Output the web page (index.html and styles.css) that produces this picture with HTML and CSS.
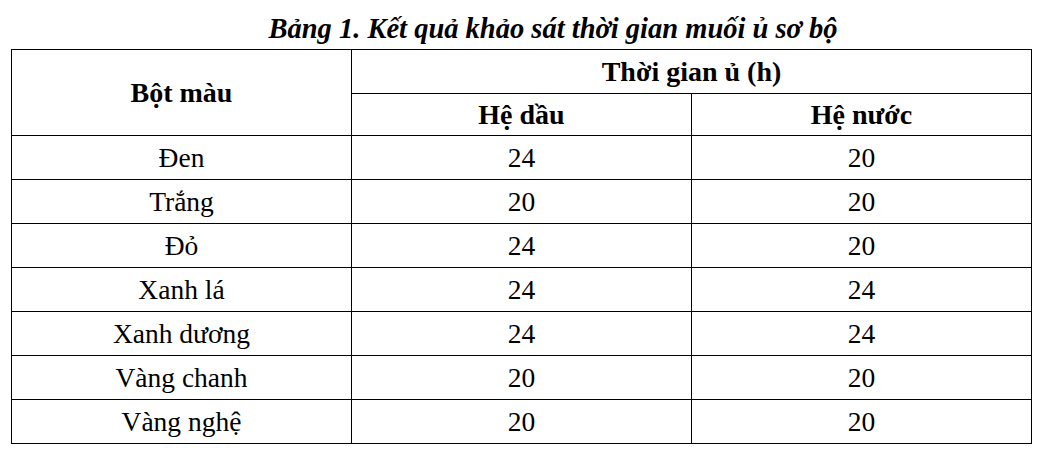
FILE: index.html
```html
<!DOCTYPE html>
<html lang="vi">
<head>
<meta charset="utf-8">
<title>Bảng 1</title>
<link rel="stylesheet" href="styles.css">
</head>
<body>
<div class="page">
  <p class="caption">Bảng 1. Kết quả khảo sát thời gian muối ủ sơ bộ</p>
  <table class="data">
    <colgroup>
      <col class="c1"><col class="c2"><col class="c3">
    </colgroup>
    <thead>
      <tr class="h1">
        <th rowspan="2">Bột màu</th>
        <th colspan="2">Thời gian ủ (h)</th>
      </tr>
      <tr class="h2">
        <th>Hệ dầu</th>
        <th>Hệ nước</th>
      </tr>
    </thead>
    <tbody>
      <tr><td>Đen</td><td>24</td><td>20</td></tr>
      <tr><td>Trắng</td><td>20</td><td>20</td></tr>
      <tr><td>Đỏ</td><td>24</td><td>20</td></tr>
      <tr><td>Xanh lá</td><td>24</td><td>24</td></tr>
      <tr><td>Xanh dương</td><td>24</td><td>24</td></tr>
      <tr><td>Vàng chanh</td><td>20</td><td>20</td></tr>
      <tr><td>Vàng nghệ</td><td>20</td><td>20</td></tr>
    </tbody>
  </table>
</div>
</body>
</html>
```
FILE: styles.css
```css
html, body {
  margin: 0;
  padding: 0;
  background: #fff;
}
.page {
  width: 1042px;
  font-family: "Liberation Serif", Tinos, "Times New Roman", serif;
  color: #000;
}
.caption {
  margin: 0;
  padding-top: 14px;
  padding-left: 64px;
  height: 30px;
  line-height: 30px;
  font-size: 28.5px;
  font-weight: bold;
  font-style: italic;
  text-align: center;
  white-space: nowrap;
}
.data {
  margin: 5px 0 0 11px;
  border-collapse: collapse;
  table-layout: fixed;
  width: 1020px;
}
.c1 { width: 340px; }
.c2 { width: 340px; }
.c3 { width: 340px; }
.data th, .data td {
  border: 1px solid #000;
  padding: 0;
  text-align: center;
  vertical-align: middle;
  line-height: 30px;
}
.data th {
  font-size: 28px;
  font-weight: bold;
}
.data td {
  font-size: 27.5px;
  font-weight: normal;
}
.h1 { height: 44px; }
.h2 { height: 42px; }
.data tbody tr { height: 44px; }
```
